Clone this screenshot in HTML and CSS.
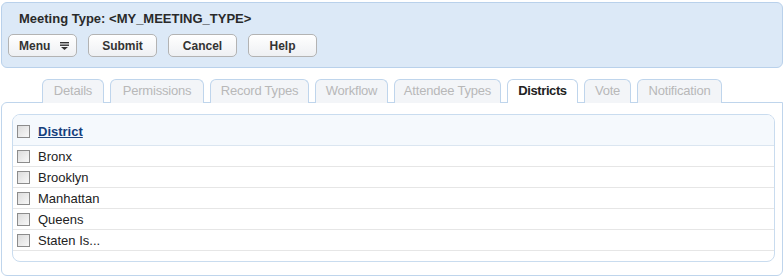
FILE: index.html
```html
<!DOCTYPE html>
<html>
<head>
<meta charset="utf-8">
<link rel="stylesheet" href="styles.css">
</head>
<body>
<div class="header">
  <div class="title">Meeting Type: &lt;MY_MEETING_TYPE&gt;</div>
  <div class="buttons">
    <button class="btn menu">Menu <svg class="menu-icon" width="9" height="8" viewBox="0 0 9 8"><rect x="0" y="0" width="9" height="1.4" fill="#333"/><rect x="0" y="2.5" width="9" height="1.4" fill="#333"/><polygon points="1,5 8,5 4.5,8" fill="#333"/></svg></button>
    <button class="btn">Submit</button>
    <button class="btn">Cancel</button>
    <button class="btn">Help</button>
  </div>
</div>
<div class="tabs">
  <div class="tab t-details">Details</div>
  <div class="tab t-perm">Permissions</div>
  <div class="tab t-rec">Record Types</div>
  <div class="tab t-wf">Workflow</div>
  <div class="tab t-att">Attendee Types</div>
  <div class="tab t-dist active">Districts</div>
  <div class="tab t-vote">Vote</div>
  <div class="tab t-notif">Notification</div>
</div>
<div class="panel">
  <div class="grid">
    <div class="grid-head"><span class="cb"></span><a class="col-link" href="#">District</a></div>
    <div class="row"><span class="cb"></span><span>Bronx</span></div>
    <div class="row"><span class="cb"></span><span>Brooklyn</span></div>
    <div class="row"><span class="cb"></span><span>Manhattan</span></div>
    <div class="row"><span class="cb"></span><span>Queens</span></div>
    <div class="row"><span class="cb"></span><span>Staten Is...</span></div>
    <div class="grid-foot"></div>
  </div>
</div>
</body>
</html>
```
FILE: styles.css
```css
html, body { margin: 0; padding: 0; background: #fff; }
body { font-family: Arial, "Liberation Sans", sans-serif; font-size: 13px; color: #222; width: 784px; height: 278px; overflow: hidden; }

.header {
  margin: 2px 1px 0 1px;
  box-sizing: border-box;
  height: 66px;
  border: 1px solid #b9d1eb;
  border-radius: 6px;
  background: #dce9f7;
  padding: 8px 6px 0 6px;
}
.title { font-weight: bold; font-size: 13px; line-height: 16px; color: #2a2a2a; padding-left: 11px; }
.buttons { display: flex; gap: 11px; margin-top: 7px; }
.btn {
  width: 69px; height: 23px; box-sizing: border-box;
  border: 1px solid #b3b3b3; border-radius: 5px;
  background: linear-gradient(#ffffff, #eef0f3);
  font-family: Arial, "Liberation Sans", sans-serif; font-weight: bold; font-size: 12px; color: #333;
  padding: 0; display: flex; align-items: center; justify-content: center;
}
.btn.menu { justify-content: flex-start; padding-left: 10px; gap: 10px; }
.menu-icon { display: block; }

.tabs { display: flex; gap: 6px; margin-top: 11px; padding-left: 42px; height: 23px; position: relative; z-index: 1; }
.tab {
  box-sizing: border-box; height: 24px; padding: 0; line-height: 22px; text-align: center;
  border: 1px solid #bfd5ec; border-bottom: none; border-radius: 6px 6px 0 0;
  background: #f3f5f8; color: #b8b8b8; font-size: 13px; white-space: nowrap;
  letter-spacing: -0.2px;
}
.t-details { width: 62px; }
.t-perm { width: 94px; }
.t-rec { width: 99px; }
.t-wf { width: 73px; }
.t-att { width: 107px; }
.t-dist { width: 71px; }
.t-vote { width: 47px; }
.t-notif { width: 85px; }
.tab.active { background: #fff; color: #222; font-weight: bold; letter-spacing: -0.4px; }

.panel {
  margin: 0 1px 0 1px;
  height: 174px; box-sizing: border-box;
  border: 1px solid #bfd5ec; border-radius: 6px;
  border-top-right-radius: 0;
  padding: 11px 7px 0 10px;
}
.grid { border: 1px solid #c9dcef; border-radius: 8px; overflow: hidden; background: #fff; }
.grid-head { height: 31px; background: #f5f9fd; border-bottom: 1px solid #dbe6f1; display: flex; align-items: center; padding-left: 4px; padding-top: 2px; box-sizing: border-box; }
.col-link { color: #163f7d; font-weight: bold; text-decoration: underline; font-size: 13px; }
.row { height: 21px; box-sizing: border-box; border-bottom: 1px solid #e6e6e6; display: flex; align-items: center; padding-left: 4px; font-size: 13px; color: #222; }
.grid-foot { height: 10px; }
.cb {
  width: 11px; height: 11px; border: 1px solid #8c8c8c; margin-right: 8px;
  background: linear-gradient(135deg, #dcdcdc, #f8f8f8);
  flex: none;
}
```
